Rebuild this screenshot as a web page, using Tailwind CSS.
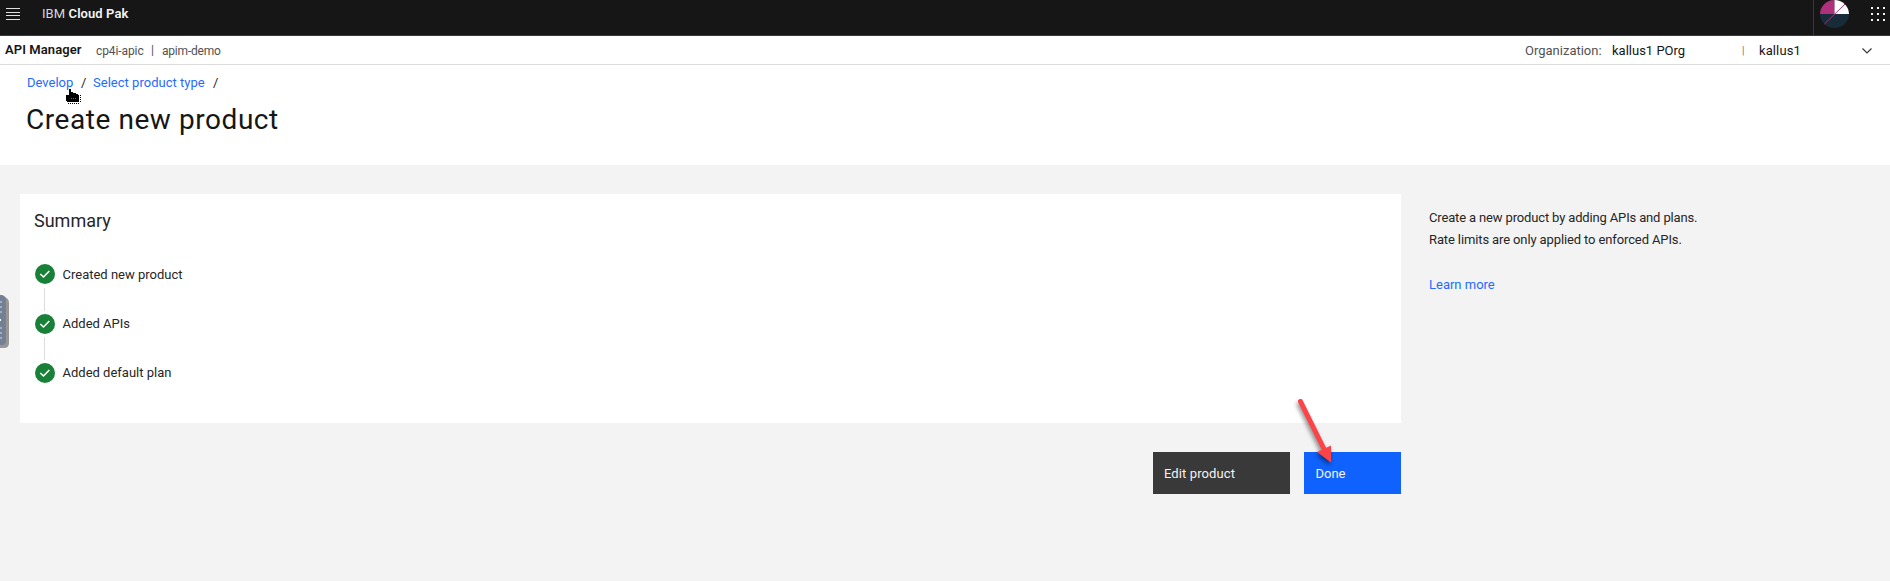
<!DOCTYPE html>
<html lang="en">
<head>
<meta charset="utf-8">
<title>Create new product</title>
<script src="https://cdn.jsdelivr.net/npm/@tailwindcss/browser@4"></script>
</head>
<body class="relative h-[581px] w-[1890px] overflow-hidden bg-[#f3f3f3] font-[Roboto,sans-serif] text-[13px] text-[#262626]">
<header class="flex h-9 items-start justify-between border-b border-[#393939] bg-[#161616] text-[#f4f4f4]">
  <div class="flex h-7 items-center">
    <svg class="ml-1.5 h-3 w-3.5" viewBox="0 0 14 12" fill="none" stroke="#e0e0e0"><path d="M0 .5h14M0 4.5h14M0 7.5h14M0 11.5h14"/></svg>
    <span class="ml-[22px] tracking-[0.08px] whitespace-nowrap"><span class="text-[#d8d8d8]">IBM</span> <b class="font-semibold">Cloud Pak</b></span>
  </div>
  <div class="flex h-[35px] items-start border-l border-[#393939] pl-1.5">
    <svg class="h-7 w-[29px]" viewBox="0 0 29 28"><path d="M0 14A14.5 14.5 0 0 1 14.5 0V14Z" fill="#b0307c"/><path d="M14.5 0A14.5 14.5 0 0 1 29 14H14.5Z" fill="#fff"/><path d="M0 14H29A14.5 14 0 0 1 0 14Z" fill="#182b38"/><path d="M4.500 24L25 4" stroke="#b0307c"/></svg>
    <svg class="mt-[7px] mr-[5px] ml-[22px] h-3.5 w-3.5" viewBox="0 0 14 14" fill="#f4f4f4"><path d="M0 0h2v2H0zM6 0h2v2H6zM12 0h2v2h-2zM0 6h2v2H0zM6 6h2v2H6zM12 6h2v2h-2zM0 12h2v2H0zM6 12h2v2H6zM12 12h2v2h-2z"/></svg>
  </div>
</header>
<nav class="flex h-[29px] items-center border-b border-[#dcdcdc] bg-white pl-[5px] whitespace-nowrap">
  <b class="w-[91px] font-semibold tracking-[0.08px] text-[#161616]">API Manager</b>
  <span class="w-[55px] pt-px text-xs tracking-[-0.1px] text-[#525252]">cp4i-apic</span>
  <span class="w-[11px] text-xs text-[#525252]">|</span>
  <span class="pt-px text-xs tracking-[-0.2px] text-[#525252]">apim-demo</span>
  <div class="ml-auto flex w-[365px] items-center pt-px">
    <span class="w-[87px] text-[#525252]">Organization:</span>
    <span class="w-[130px] text-[#161616]">kallus1 POrg</span>
    <span class="w-[17px] text-[10px] text-[#6f6f6f]">|</span>
    <span class="w-[103px] tracking-[0.1px] text-[#161616]">kallus1</span>
    <svg class="h-1.5 w-2.5" viewBox="0 0 10 6" fill="none" stroke="#393939" stroke-width="1.2"><path d="M.5.5 5 5 9.500.5"/></svg>
  </div>
</nav>
<section class="h-[100px] bg-white px-[27px] pt-2 whitespace-nowrap">
  <div class="flex h-5 items-center leading-5">
    <a class="w-[54px] text-[#1f6bff]">Develop</a><span class="w-3">/</span>
    <a class="w-[120px] tracking-[0.02px] text-[#1f6bff]">Select product type</a><span>/</span>
  </div>
  <h1 class="mt-[9px] -ml-px w-fit text-[28px] leading-9 tracking-[0.56px] text-[#161616]">Create new product</h1>
</section>
<main class="flex pt-[29px] pl-5">
  <div class="w-[1381px]">
    <section class="h-[229px] bg-white pt-[15px] pl-[15px]">
      <h2 class="-ml-px w-fit text-lg leading-6">Summary</h2>
      <ul class="mt-[31px]">
        <li class="flex h-[50px] items-start gap-[7.5px]">
          <div class="flex w-5 flex-col gap-1"><svg class="h-5 w-5" viewBox="0 0 20 20"><circle cx="10" cy="10" r="10" fill="#198038"/><path d="M5.300 10l3.200 3L14.300 7" stroke="#fff" stroke-width="1.600" fill="none"/></svg><i class="ml-[9px] h-[23px] w-px bg-[#dcdcdc]"></i></div>
          <span class="leading-[21px]">Created new product</span>
        </li>
        <li class="flex h-[49px] items-start gap-[7.5px]">
          <div class="flex w-5 flex-col gap-[3px]"><svg class="h-5 w-5" viewBox="0 0 20 20"><circle cx="10" cy="10" r="10" fill="#198038"/><path d="M5.300 10l3.200 3L14.300 7" stroke="#fff" stroke-width="1.600" fill="none"/></svg><i class="ml-[9px] h-[23px] w-px bg-[#dcdcdc]"></i></div>
          <span class="leading-[19px]">Added APIs</span>
        </li>
        <li class="flex h-5 items-start gap-[7.5px]">
          <svg class="h-5 w-5" viewBox="0 0 20 20"><circle cx="10" cy="10" r="10" fill="#198038"/><path d="M5.300 10l3.200 3L14.300 7" stroke="#fff" stroke-width="1.600" fill="none"/></svg>
          <span class="leading-5">Added default plan</span>
        </li>
      </ul>
    </section>
    <div class="mt-[29px] flex justify-end gap-3.5 text-[#f4f4f4]">
      <button class="h-[42px] w-[137px] bg-[#393939] pt-0.5 pl-[11px] text-left tracking-[0.1px]">Edit product</button>
      <button class="h-[42px] w-[97px] bg-[#0f62fe] pt-0.5 pl-[11.5px] text-left">Done</button>
    </div>
  </div>
  <aside class="ml-[28px] pt-[13px] leading-[22px] whitespace-nowrap">
    <p class="w-fit tracking-[-0.15px]">Create a new product by adding APIs and plans.</p>
    <p class="w-fit tracking-[-0.12px]">Rate limits are only applied to enforced APIs.</p>
    <a class="mt-[23px] block w-fit text-[#1f6bff]">Learn more</a>
  </aside>
</main>

<!-- side drawer handle -->
<svg class="absolute top-[295px] left-0 h-[54px] w-[9px]" viewBox="0 0 9 54">
  <path d="M0 2H4Q9 3 9 8V48Q9 53 4 53H0Z" fill="#999795"/>
  <path d="M0 0H2Q6 1 6 5V46Q6 50 2 50H0Z" fill="#738096"/>
  <path d="M0 7h2M0 12h2M0 17h2M0 33h2M0 38h2M0 43h2" stroke="#a3acba" stroke-width="2"/>
  <path d="M0 25h1" stroke="#fff" stroke-width="2"/>
</svg>

<!-- hand pointer -->
<svg class="absolute top-[88px] left-[65px] h-4 w-4" viewBox="0 0 16 16" shape-rendering="crispEdges">
  <path d="M4 1h2v3h2v1h3v1h2v1h1v7H2v-1H1V7h3z" fill="#000"/>
  <path d="M6 10h1v1H6zM8 10h1v1H8zM10 10h1v1h-1z" fill="#666"/>
  <path d="M3 15.500h11M15.500 7v7" stroke="#000" stroke-dasharray="1 1"/>
</svg>

<!-- callout arrow -->
<svg class="absolute top-[392px] left-[1290px] h-20 w-[50px] drop-shadow-[-1px_3px_2px_rgba(0,0,0,0.45)]" viewBox="0 0 50 80">
  <path d="M10.500 9.500L34 57" stroke="#fc4347" stroke-width="5" stroke-linecap="round"/>
  <path d="M27 60L41 53.500V70.500Z" fill="#fc4347"/>
</svg>
</body>
</html>
